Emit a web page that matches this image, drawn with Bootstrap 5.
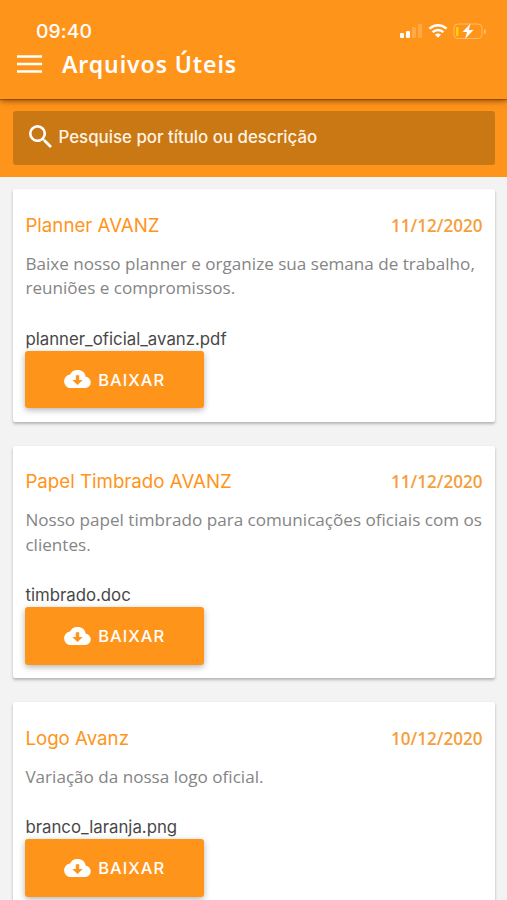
<!DOCTYPE html>
<html lang="pt-BR">
<head>
<meta charset="utf-8">
<meta name="viewport" content="width=device-width, initial-scale=1">
<title>Arquivos Úteis</title>
<link href="https://cdn.jsdelivr.net/npm/bootstrap@5.3.0/dist/css/bootstrap.min.css" rel="stylesheet">
<style>
:root{--brand:#ff941a}
body{background:#f3f3f3;font-family:Inter,sans-serif;height:900px;overflow:hidden}
svg{display:block;flex:none}
.app-header{height:99px;background:var(--brand);box-shadow:0 2px 6px rgba(90,45,0,.65),0 1px 1px rgba(90,45,0,.4);z-index:2}
.status-row{height:24px;margin-top:19px;padding-left:36px;padding-right:20px}
.clock{font-size:19.3px;font-weight:500;line-height:24px;letter-spacing:.1px}
.title-row{height:42px;padding-left:17px}
.page-title{font-family:"Noto Sans",sans-serif;font-size:23px;font-weight:600;line-height:30px;margin-left:20px;letter-spacing:.9px}
.search-area{height:78px;background:var(--brand);padding:12px 12.5px 12.5px 13px}
.search-box{background:#c97814;border-radius:3px;height:53.5px;padding-left:16px}
.search-box svg{margin-top:-2px}
.search-box span{font-size:16.85px;font-weight:500;color:#fff3e2;margin-left:6.5px;margin-top:-1px}
.file-list{padding:12.4px 12.5px 0 13px;gap:24.2px}
.file-card{background:#fff;border:0;border-radius:2px;padding:24.5px 12px 13.5px 12.4px;box-shadow:0 2px 3px rgba(0,0,0,.26),0 0 2px rgba(0,0,0,.04)}
.file-title{font-size:18.7px;line-height:24px;color:var(--brand);font-weight:400}
.file-date{font-family:"Open Sans",sans-serif;font-size:17.1px;font-weight:600;line-height:24px;color:#f5a03c}
.file-desc{font-family:"Open Sans",sans-serif;font-size:17.1px;line-height:24.3px;color:#858585;margin-top:14px;white-space:nowrap}
.file-name{font-size:16.8px;line-height:20px;color:#484848;margin-top:28.2px}
.btn-download{width:178.5px;height:57.5px;background:var(--brand);color:#fff;border:0;border-radius:3px;box-shadow:0 2px 6px rgba(0,0,0,.3);padding:0;margin-top:2px}
.btn-download span{font-size:16.5px;font-weight:450;letter-spacing:1px;margin-left:7px;margin-top:1px}
</style>
<script src="https://cdn.jsdelivr.net/npm/bootstrap@5.3.0/dist/js/bootstrap.bundle.min.js"></script>
</head>
<body>
<svg class="d-none" aria-hidden="true">
  <symbol id="cloud" viewBox="0 0 24 16"><path fill-rule="evenodd" d="M19.35 6.04A7.49 7.49 0 0 0 5.35 4.04 6 6 0 0 0 6 16h13a5 5 0 0 0 .35-9.96zM16.600 8.800l-4.600 4.500-4.600-4.500h3.100V4.600h3v4.200z"/></symbol>
</svg>
<header class="app-header position-relative overflow-visible text-white d-flex flex-column">
  <div class="status-row d-flex align-items-center justify-content-between">
    <div class="clock">09:40</div>
    <svg width="88" height="20" viewBox="0 0 88 20">
      <g fill="#fff"><rect x="1" y="12" width="4" height="5" rx="1"/><rect x="7" y="10" width="4" height="7" rx="1"/><rect x="13" y="6" width="4" height="11" rx="1" opacity=".2"/><rect x="19" y="3" width="4" height="14" rx="1" opacity=".2"/></g>
      <g fill="none" stroke="#fff" stroke-width="2.5"><path d="M30.5 7.700a12.200 12.200 0 0 1 17 0"/><path d="M33.600 11.200a7.800 7.800 0 0 1 10.800 0"/></g><path d="M39 16.800l-3-3a4.200 4.200 0 0 1 6 0z" fill="#fff"/>
      <rect x="55" y="3" width="28" height="14.500" rx="4" fill="none" stroke="#fff" opacity=".35"/><path d="M85 8v5q2-.5 2-2.500t-2-2.500z" fill="#fff" opacity=".4"/><rect x="57" y="6" width="2.500" height="9" rx="1" fill="#ffd400"/><path d="M71.500 2.500L63.500 11h4.500L66 18l8.500-9h-4.700z" fill="#fff"/>
    </svg>
  </div>
  <div class="title-row d-flex align-items-center">
    <svg width="25" height="19" viewBox="0 0 25 19"><path d="M0 1.500h25M0 9h25M0 16.500h25" stroke="#fff" stroke-width="2.300"/></svg>
    <h1 class="page-title mb-0">Arquivos Úteis</h1>
  </div>
</header>
<div class="search-area">
  <div class="search-box d-flex align-items-center">
    <svg width="23" height="23" viewBox="3 3 17.500 17.500"><path fill="#fff" d="M15.500 14h-.79l-.28-.27A6.471 6.471 0 0 0 16 9.500 6.500 6.500 0 1 0 9.500 16c1.610 0 3.090-.59 4.230-1.570l.27.28v.79l5 4.990L20.490 19l-4.990-5zm-6 0C7.010 14 5 11.990 5 9.500S7.010 5 9.500 5 14 7.010 14 9.500 11.990 14 9.500 14z"/></svg>
    <span>Pesquise por título ou descrição</span>
  </div>
</div>
<main class="file-list d-flex flex-column">
  <article class="card file-card">
    <div class="d-flex justify-content-between align-items-center"><h2 class="file-title mb-0">Planner AVANZ</h2><time class="file-date">11/12/2020</time></div>
    <p class="file-desc mb-0">Baixe nosso planner e organize sua semana de trabalho,<br>reuniões e compromissos.</p>
    <div class="file-name">planner_oficial_avanz.pdf</div>
    <button class="btn btn-download d-flex align-items-center justify-content-center"><svg width="27" height="18" fill="#fff"><use href="#cloud"/></svg><span>BAIXAR</span></button>
  </article>
  <article class="card file-card">
    <div class="d-flex justify-content-between align-items-center"><h2 class="file-title mb-0">Papel Timbrado AVANZ</h2><time class="file-date">11/12/2020</time></div>
    <p class="file-desc mb-0">Nosso papel timbrado para comunicações oficiais com os<br>clientes.</p>
    <div class="file-name">timbrado.doc</div>
    <button class="btn btn-download d-flex align-items-center justify-content-center"><svg width="27" height="18" fill="#fff"><use href="#cloud"/></svg><span>BAIXAR</span></button>
  </article>
  <article class="card file-card">
    <div class="d-flex justify-content-between align-items-center"><h2 class="file-title mb-0">Logo Avanz</h2><time class="file-date">10/12/2020</time></div>
    <p class="file-desc mb-0">Variação da nossa logo oficial.</p>
    <div class="file-name">branco_laranja.png</div>
    <button class="btn btn-download d-flex align-items-center justify-content-center"><svg width="27" height="18" fill="#fff"><use href="#cloud"/></svg><span>BAIXAR</span></button>
  </article>
</main>
</body>
</html>
